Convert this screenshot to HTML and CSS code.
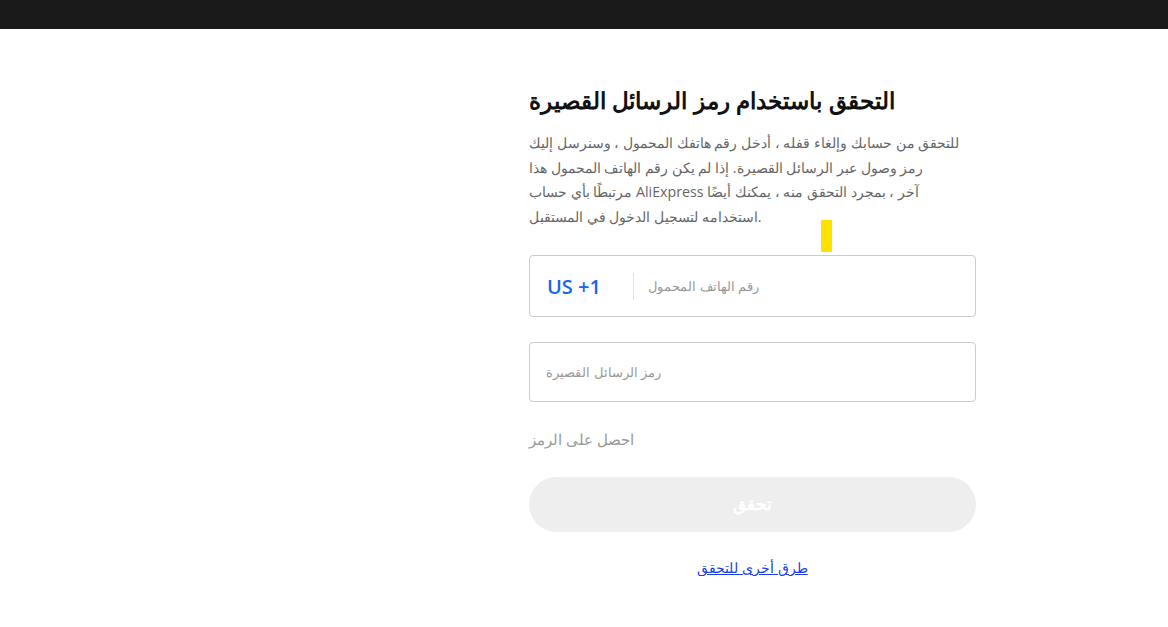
FILE: index.html
```html
<!DOCTYPE html>
<html lang="ar">
<head>
  <meta charset="UTF-8">
  <title>التحقق باستخدام رمز الرسائل القصيرة</title>
  <link rel="stylesheet" href="styles.css">
</head>
<body>
  <div class="topbar"></div>
  <div class="page">
    <div class="side"></div>
    <main class="verify">
      <h1 class="verify-title">التحقق باستخدام رمز الرسائل القصيرة</h1>
      <p class="verify-desc">للتحقق من حسابك وإلغاء قفله ، أدخل رقم هاتفك المحمول ، وسنرسل إليك<br>رمز وصول عبر الرسائل القصيرة. إذا لم يكن رقم الهاتف المحمول هذا<br>مرتبطًا بأي حساب AliExpress آخر ، بمجرد التحقق منه ، يمكنك أيضًا<br>استخدامه لتسجيل الدخول في المستقبل.</p>
      <span class="marker"></span>

      <div class="field field-phone">
        <span class="country">US +1</span>
        <span class="divider"></span>
        <input class="field-input" type="text" placeholder="رقم الهاتف المحمول">
      </div>

      <div class="field">
        <input class="field-input" type="text" placeholder="رمز الرسائل القصيرة">
      </div>

      <a class="get-code">احصل على الرمز</a>

      <button class="submit" disabled>تحقق</button>

      <div class="other">
        <a href="#">طرق أخرى للتحقق</a>
      </div>
    </main>
  </div>
</body>
</html>
```

FILE: styles.css
```css
* {
  box-sizing: border-box;
}
body {
  margin: 0;
  font-family: 'Liberation Sans', Arial, sans-serif;
  background: #fff;
  color: #222;
}
.topbar {
  height: 29px;
  background: #1a1a1a;
}
.page {
  display: grid;
  grid-template-columns: 529px 447px;
}
.verify {
  position: relative;
  padding-top: 55px;
}
.verify-title {
  margin: 0;
  font-size: 23.4px;
  font-weight: 700;
  line-height: 34px;
  color: #111;
  white-space: nowrap;
}
.verify-desc {
  margin: 13px 0 0;
  font-family: 'Open Sans', 'Liberation Sans', sans-serif;
  font-size: 14.2px;
  line-height: 24.5px;
  color: #666;
  white-space: nowrap;
}
.marker {
  position: absolute;
  left: 292px;
  top: 191px;
  width: 11px;
  height: 32px;
  background: #ffe100;
}
.field {
  display: flex;
  align-items: center;
  height: 60px;
  padding: 0 16px;
  border: 1px solid #ccc;
  border-radius: 4px;
}
.field-phone {
  height: 62px;
  margin-top: 26px;
}
.field + .field {
  margin-top: 25px;
}
.country {
  font-family: 'Open Sans', sans-serif;
  font-size: 20px;
  font-weight: 600;
  color: #1466f5;
  padding-left: 1px;
  width: 87px;
}
.divider {
  width: 1px;
  height: 27px;
  background: #e2e2e2;
  margin-right: 14px;
}
.field-input {
  flex: 1;
  border: none;
  outline: none;
  font-family: 'Liberation Sans', Arial, sans-serif;
  font-size: 13.4px;
  color: #333;
  padding: 0;
  background: transparent;
}
.field-input::placeholder {
  color: #999;
}
.get-code {
  display: block;
  margin-top: 28px;
  font-size: 15px;
  color: #999;
  line-height: 20px;
}
.submit {
  display: block;
  width: 100%;
  height: 55px;
  margin-top: 27px;
  border: none;
  border-radius: 28px;
  background: #eee;
  color: #fff;
  font-family: 'Liberation Sans', Arial, sans-serif;
  font-size: 17px;
  font-weight: 700;
}
.other {
  margin-top: 28px;
  text-align: center;
  font-size: 13.5px;
}
.other a {
  color: #1a3de8;
  text-decoration: underline;
}
```
